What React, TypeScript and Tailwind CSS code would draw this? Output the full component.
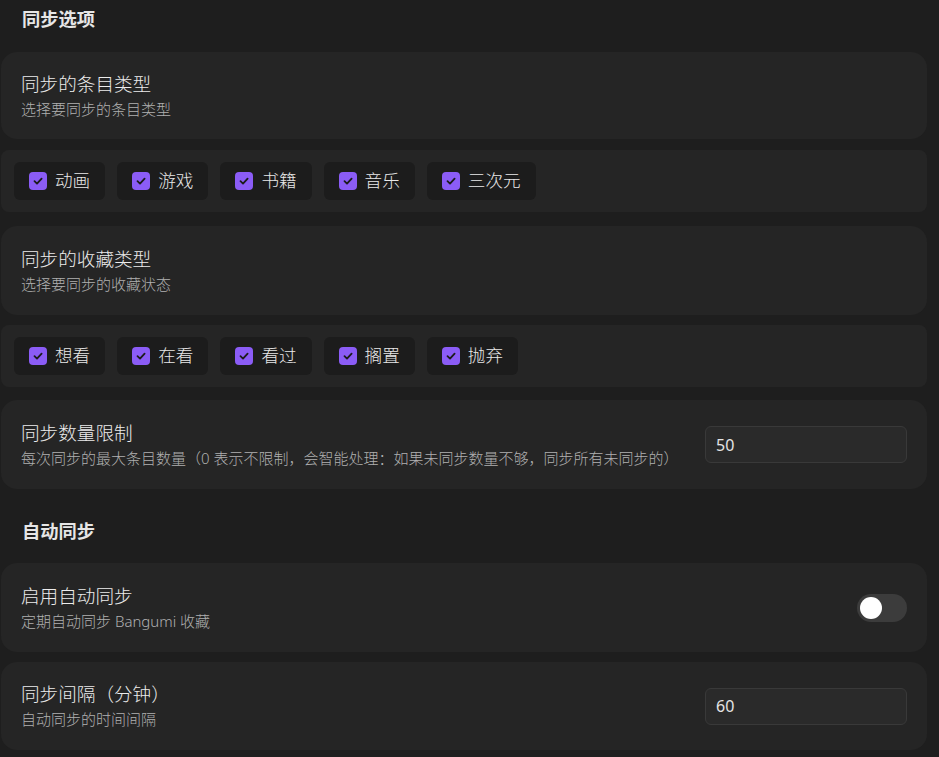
import { useState } from 'react';

const font = { fontFamily: '"Noto Sans", "Noto Sans CJK SC", sans-serif' };

interface Option {
  label: string;
  checked: boolean;
}

function CheckIcon() {
  return (
    <span className="w-[18px] h-[18px] rounded-[4px] bg-[#8b5cf6] flex items-center justify-center shrink-0">
      <svg width="12" height="12" viewBox="0 0 12 12" fill="none">
        <path d="M2.5 6.2 L5 8.6 L9.6 3.6" stroke="#1c1c1c" strokeWidth="1.8" strokeLinecap="round" strokeLinejoin="round" />
      </svg>
    </span>
  );
}

function CheckRow({ options, className }: { options: Option[]; className?: string }) {
  return (
    <div className={`h-[62px] rounded-lg bg-[#252525] flex items-center gap-3 px-[13px] ${className ?? ''}`}>
      {options.map((o) => (
        <label key={o.label} className="h-[38px] rounded-md bg-[#1c1c1c] flex items-center gap-2 px-[15px] cursor-pointer">
          <CheckIcon />
          <span className="text-[17.6px] font-light text-[#e8e8e8] leading-none">{o.label}</span>
        </label>
      ))}
    </div>
  );
}

function SettingCard({
  title,
  desc,
  height = 'h-[89px]',
  className,
  children,
}: {
  title: string;
  desc: string;
  height?: string;
  className?: string;
  children?: React.ReactNode;
}) {
  return (
    <div className={`${height} rounded-2xl bg-[#252525] flex items-center justify-between pl-5 pr-5 ${className ?? ''}`}>
      <div className="flex flex-col gap-[2px] -mt-[2px]">
        <div className="text-[18.6px] leading-[26px] font-light text-[#ececec]">{title}</div>
        <div className="text-[15px] leading-[20px] font-light text-[#b0b0b0]">{desc}</div>
      </div>
      {children}
    </div>
  );
}

function NumberInput({ value }: { value: string }) {
  return (
    <input
      defaultValue={value}
      className="w-[202px] h-[37px] rounded-md bg-[#2a2a2a] border border-[#393939] px-[10px] text-[16px] text-[#e4e4e4] outline-none"
      style={font}
    />
  );
}

function Toggle() {
  const [on, setOn] = useState(false);
  return (
    <button
      onClick={() => setOn(!on)}
      className={`w-[50px] h-[28px] rounded-full flex items-center px-[3px] ${on ? 'bg-[#8b5cf6] justify-end' : 'bg-[#3c3c3c] justify-start'}`}
    >
      <span className="w-[22px] h-[22px] rounded-full bg-white" />
    </button>
  );
}

export default function App() {
  const itemTypes: Option[] = ['动画', '游戏', '书籍', '音乐', '三次元'].map((label) => ({ label, checked: true }));
  const collectTypes: Option[] = ['想看', '在看', '看过', '搁置', '抛弃'].map((label) => ({ label, checked: true }));

  return (
    <div className="w-[939px] h-[757px] overflow-hidden bg-[#1e1e1e] pl-px pr-3 pt-[6px]" style={font}>
      <h2 className="px-[21px] text-[18.3px] leading-[26px] font-bold text-[#e6e6e6]">同步选项</h2>

      <SettingCard title="同步的条目类型" desc="选择要同步的条目类型" height="h-[87px]" className="mt-5" />
      <CheckRow options={itemTypes} className="mt-[11px]" />

      <SettingCard title="同步的收藏类型" desc="选择要同步的收藏状态" className="mt-[14px]" />
      <CheckRow options={collectTypes} className="mt-[10px]" />

      <SettingCard
        title="同步数量限制"
        desc="每次同步的最大条目数量（0 表示不限制，会智能处理：如果未同步数量不够，同步所有未同步的）"
        className="mt-[13px]"
      >
        <NumberInput value="50" />
      </SettingCard>

      <h2 className="mt-[29px] px-[21px] text-[18.3px] leading-[26px] font-bold text-[#e6e6e6]">自动同步</h2>

      <SettingCard title="启用自动同步" desc="定期自动同步 Bangumi 收藏" className="mt-[19px]">
        <Toggle />
      </SettingCard>

      <SettingCard title="同步间隔（分钟）" desc="自动同步的时间间隔" height="h-[88px]" className="mt-[10px]">
        <NumberInput value="60" />
      </SettingCard>
    </div>
  );
}
